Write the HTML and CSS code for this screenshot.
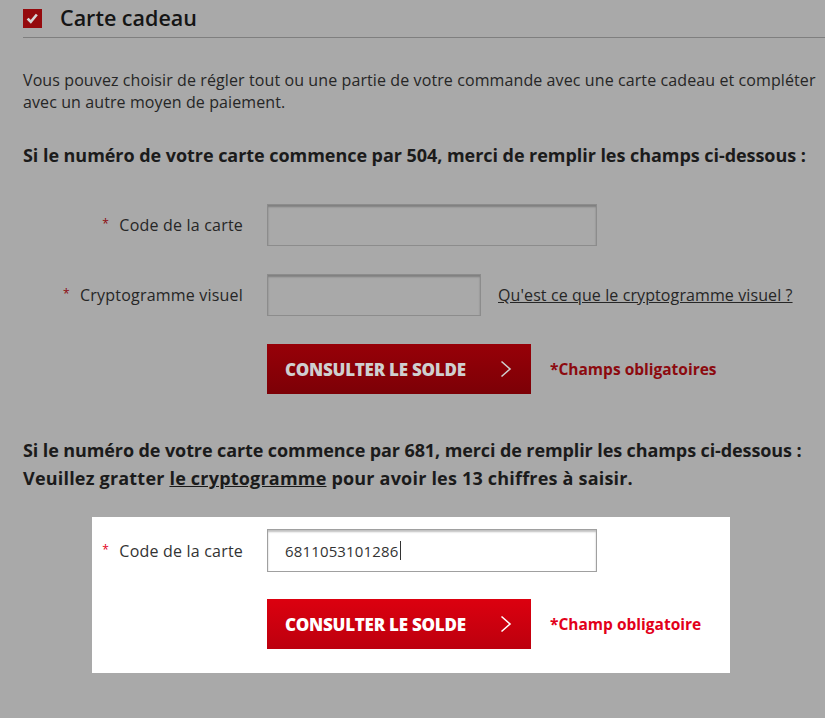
FILE: index.html
```html
<!DOCTYPE html>
<html lang="fr">
<head>
  <meta charset="UTF-8">
  <meta name="viewport" content="width=device-width, initial-scale=1.0">
  <title>Carte cadeau</title>
  <link rel="stylesheet" href="styles.css">
</head>
<body>
  <div class="giftcard">
    <div class="giftcard-head">
      <svg class="check" width="19" height="19" viewBox="0 0 19 19">
        <rect width="19" height="19" fill="#950a0d"/>
        <path d="M5.5 10.5 L7.8 12.8 L13 6.5" stroke="#d6d6d6" stroke-width="2.6" fill="none" stroke-linecap="square"/>
      </svg>
      <h2>Carte cadeau</h2>
    </div>

    <p class="intro">Vous pouvez choisir de régler tout ou une partie de votre commande avec une carte cadeau et compléter avec un autre moyen de paiement.</p>

    <h3 class="lead">Si le numéro de votre carte commence par 504, merci de remplir les champs ci-dessous :</h3>

    <!-- cartes 504 : code + cryptogramme -->
    <div class="form dim">
      <label class="field-label"><span class="req">*</span> Code de la carte</label>
      <input class="field wide" type="text">

      <label class="field-label"><span class="req">*</span> Cryptogramme visuel</label>
      <div class="field-line">
        <input class="field short" type="text">
        <a href="#" class="help">Qu'est ce que le cryptogramme visuel ?</a>
      </div>

      <span></span>
      <div class="field-line">
        <button class="btn">CONSULTER LE SOLDE
          <svg class="chev" width="12" height="18" viewBox="0 0 12 18"><path d="M1.5 1.5 L10 9 L1.5 16.5" stroke="currentColor" stroke-width="1.6" fill="none"/></svg>
        </button>
        <span class="mandatory">*Champs obligatoires</span>
      </div>
    </div>

    <p class="lead-681">Si le numéro de votre carte commence par 681, merci de remplir les champs ci-dessous :<br>
      <span class="scratch">Veuillez gratter <a href="#">le cryptogramme</a> pour avoir les 13 chiffres à saisir.</span></p>

    <!-- cartes 681 : seulement le code -->
    <div class="form lit">
      <label class="field-label"><span class="req">*</span> Code de la carte</label>
      <div class="field-wrap">
        <input class="field wide" type="text" value="6811053101286">
        <span class="caret"></span>
      </div>

      <span></span>
      <div class="field-line">
        <button class="btn">CONSULTER LE SOLDE
          <svg class="chev" width="12" height="18" viewBox="0 0 12 18"><path d="M1.5 1.5 L10 9 L1.5 16.5" stroke="currentColor" stroke-width="1.6" fill="none"/></svg>
        </button>
        <span class="mandatory">*Champ obligatoire</span>
      </div>
    </div>
  </div>
</body>
</html>
```

FILE: styles.css
```css
body {
  margin: 0;
  background-color: #a9a9a9;
  font-family: "Open Sans", sans-serif;
  color: #1f1f1f;
  overflow: hidden;
}

.giftcard {
  padding-left: 23px;
}

.giftcard-head {
  display: flex;
  align-items: center;
  gap: 18px;
  height: 37px;
  border-bottom: 1px solid #7f7f7f;
}

.giftcard-head h2 {
  margin: 0 0 2px;
  font-size: 21.5px;
  font-weight: 600;
  color: #151515;
}

.intro {
  margin: 31px 0 0;
  font-size: 16px;
  letter-spacing: 0.1px;
  line-height: 22px;
  color: #262626;
}

.lead {
  margin: 31px 0 0;
  font-size: 18px;
  letter-spacing: -0.05px;
  line-height: 22px;
  font-weight: 700;
  color: #1b1b1b;
}

.form {
  display: grid;
  grid-template-columns: 220px auto;
  column-gap: 24px;
  align-items: center;
}

.form.dim {
  margin-top: 38px;
  row-gap: 28px;
}

.field-label {
  text-align: right;
  font-size: 16px;
  letter-spacing: 0.2px;
  color: #262626;
}

.req {
  color: #8c0a0f;
  font-size: 12px;
  vertical-align: 3px;
  margin-right: 6px;
}

.field {
  box-sizing: border-box;
  height: 42px;
  border: 1px solid #8c8c8c;
  box-shadow: inset 0 2px 2px rgba(0, 0, 0, 0.25);
  background: #a9a9a9;
  font-family: "Open Sans", sans-serif;
  font-size: 15px;
  letter-spacing: 0.15px;
  padding: 0 17px;
  outline: none;
}

.field.wide { width: 330px; }
.field.short { width: 214px; }

.field-wrap {
  position: relative;
  width: 330px;
}

.field-wrap .field {
  display: block;
}

/* text cursor after the typed number */
.caret {
  position: absolute;
  left: 133px;
  top: 12px;
  width: 1px;
  height: 19px;
  background: #333;
}

.field-line {
  display: flex;
  align-items: center;
}

.help {
  margin-left: 17px;
  font-size: 16px;
  letter-spacing: 0.1px;
  color: #262626;
}

.btn {
  width: 264px;
  height: 50px;
  border: none;
  background: linear-gradient(#970008, #7c0006);
  color: #cfcfcf;
  font-family: "Open Sans", sans-serif;
  font-weight: 800;
  font-size: 17px;
  letter-spacing: -0.25px;
  padding: 0 0 0 18px;
  display: flex;
  align-items: center;
}

.chev {
  margin-left: auto;
  margin-right: 19px;
}

.mandatory {
  margin-left: 19px;
  font-size: 15.5px;
  font-weight: 700;
  color: #8c0a0f;
}

.lead-681 {
  margin: 42px 0 0;
  font-size: 18px;
  line-height: 28px;
  font-weight: 700;
  letter-spacing: -0.1px;
  color: #1b1b1b;
}

.lead-681 .scratch {
  letter-spacing: 0.2px;
}

.lead-681 a {
  color: #1b1b1b;
}

/* highlighted block keeps the page's normal colours */
.form.lit {
  margin: 25px 0 0 69px;
  width: 638px;
  background: #fff;
  padding: 12px 0 24px;
  grid-template-columns: 151px auto;
  row-gap: 27px;
}

.lit .field-label { color: #333; }
.lit .req { color: #e2001a; }

.lit .field {
  background: #fff;
  border-color: #a0a0a0;
  color: #333;
  height: 43px;
}

.lit .btn {
  background: linear-gradient(#dc000f, #bc000e);
  color: #fff;
}

.lit .mandatory { color: #e2001a; }
```
